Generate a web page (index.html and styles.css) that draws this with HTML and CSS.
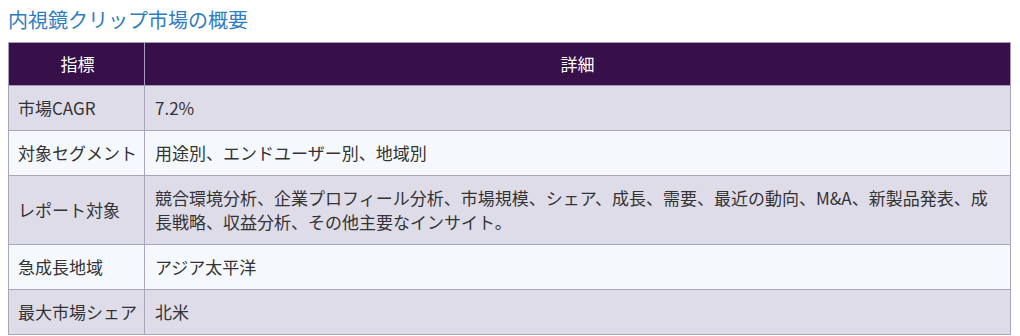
FILE: index.html
```html
<!DOCTYPE html>
<html lang="ja">
<head>
<meta charset="utf-8">
<title>内視鏡クリップ市場の概要</title>
<link rel="stylesheet" href="styles.css">
</head>
<body>
<h2 class="title">内視鏡クリップ市場の概要</h2>
<table class="summary">
  <thead>
    <tr><th class="col-key">指標</th><th>詳細</th></tr>
  </thead>
  <tbody>
    <tr class="odd"><td>市場CAGR</td><td>7.2%</td></tr>
    <tr class="even"><td>対象セグメント</td><td>用途別、エンドユーザー別、地域別</td></tr>
    <tr class="odd"><td>レポート対象</td><td>競合環境分析、企業プロフィール分析、市場規模、シェア、成長、需要、最近の動向、M&amp;A、新製品発表、成長戦略、収益分析、その他主要なインサイト。</td></tr>
    <tr class="even"><td>急成長地域</td><td>アジア太平洋</td></tr>
    <tr class="odd"><td>最大市場シェア</td><td>北米</td></tr>
  </tbody>
</table>
</body>
</html>
```

FILE: styles.css
```css
body {
  margin: 8px;
  background: #ffffff;
  font-family: "Noto Sans CJK JP", "Noto Sans", sans-serif;
  color: #333333;
}
.title {
  margin: 0 0 10px 0;
  font-size: 20px;
  line-height: 24px;
  font-weight: normal;
  color: #2f7dbf;
}
.summary {
  width: 1003px;
  border-collapse: collapse;
  font-size: 17px;
  line-height: 24px;
}
.summary th,
.summary td {
  border: 1px solid #aaa4bd;
  padding: 10px 10px;
  text-align: left;
  vertical-align: middle;
}
.summary td:first-child {
  padding: 10px 7px 10px 9px;
}
.summary th {
  background: #381049;
  color: #ffffff;
  font-weight: normal;
  text-align: center;
  padding: 9px 10px;
  border-color: #a99bbd;
}
.summary th.col-key {
  padding: 9px 7px 9px 9px;
}
.summary .col-key {
  width: 119px;
}
.summary tr.odd td {
  background: #dfdcea;
}
.summary tr.even td {
  background: #f5f9fd;
}
```
